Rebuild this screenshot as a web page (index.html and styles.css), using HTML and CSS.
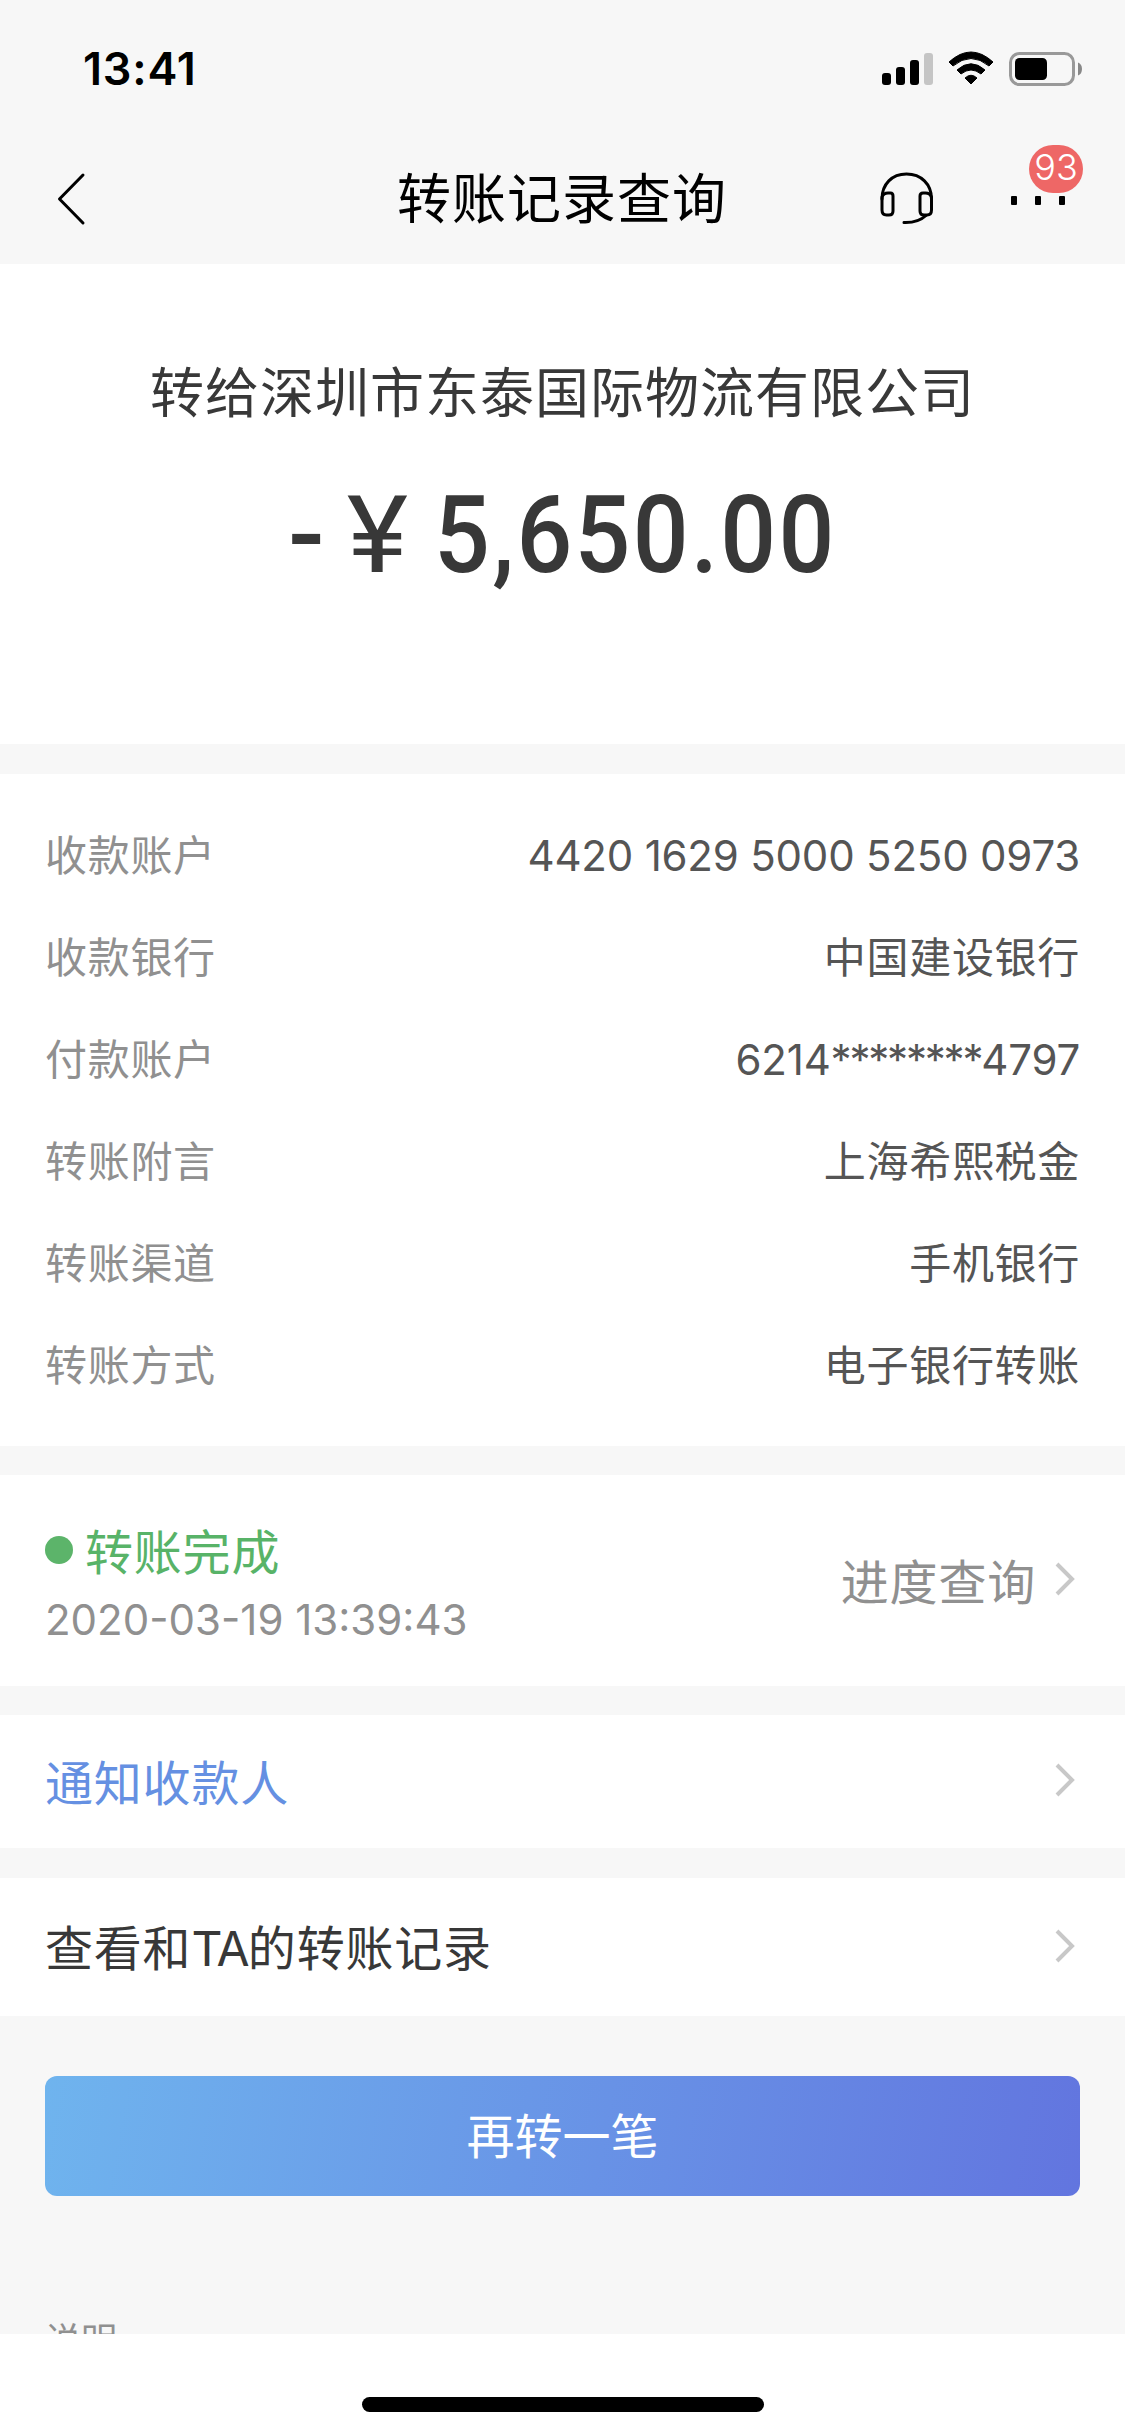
FILE: index.html
```
<!DOCTYPE html>
<html lang="zh-CN">
<head>
    <meta charset="UTF-8">
    <meta name="viewport" content="width=device-width, initial-scale=1.0">
    <title>转账记录查询</title>
    <link rel="stylesheet" href="styles.css">
</head>
<body>
    <div class="page">
        <div class="status-bar">
            <span class="time">13:41</span>
            <svg class="status-icons" width="202" height="36" viewBox="0 0 202 36">
                <!-- signal -->
                <rect x="0" y="22" width="9" height="12" rx="3"/>
                <rect x="14" y="16" width="9" height="18" rx="3"/>
                <rect x="28" y="9" width="9" height="25" rx="3"/>
                <rect x="42" y="2" width="9" height="32" rx="3" fill="#c5c5c5"/>
                <!-- wifi -->
                <path d="M67 11 Q89 -9 111 11 L107 15 Q89 0 71 15 Z" stroke="#000" stroke-width="1" stroke-linejoin="round"/>
                <path d="M75 19 Q89 6.500 103 19 L99 23 Q89 15 79 23 Z" stroke="#000" stroke-width="1" stroke-linejoin="round"/>
                <path d="M83 27 Q89 21.500 95 27 L89 33 Z" stroke="#000" stroke-width="1" stroke-linejoin="round"/>
                <!-- battery -->
                <rect x="128.500" y="2.500" width="63" height="31" rx="9" fill="none" stroke="#999" stroke-width="3"/>
                <rect x="133" y="7" width="32" height="22" rx="4.500"/>
                <path d="M196 11.500 Q200 13 200 18 Q200 23 196 24.500 Z" fill="#888"/>
            </svg>
        </div>

        <div class="nav">
            <svg class="back" width="30" height="54" viewBox="0 0 30 54">
                <path d="M26 3 L2.500 27 L26 51" fill="none" stroke="#000" stroke-width="3" stroke-linecap="round" stroke-linejoin="round"/>
            </svg>
            <h1>转账记录查询</h1>
            <svg class="service" width="54" height="54" viewBox="0 0 54 54">
                <g fill="none" stroke="#000" stroke-width="3" stroke-linecap="round" stroke-linejoin="round">
                    <path d="M2 27 C2 12 12 2 26.500 2 C41 2 51.500 12 51.500 27"/>
                    <path d="M2 25 Q3.500 21 8 21 H10.500 Q13 21 13 24 V39 Q13 43 9 43 H6.500 Q2 43 2 38 Z"/>
                    <path d="M51.500 25 Q50 21 45.500 21 H43 Q40 21 40 24 V39 Q40 43 44 43 H47 Q51.500 43 51.500 38 Z"/>
                    <path d="M46 43.500 Q38 51 24 50.500"/>
                </g>
            </svg>
            <div class="more">
                <i></i><i></i><i></i>
                <span class="badge">93</span>
            </div>
        </div>

        <div class="summary">
            <div class="payee">转给深圳市东泰国际物流有限公司</div>
            <div class="amount">
                <span class="minus">-</span>
                <span class="yen">¥</span>
                <span class="number">5,650.00</span>
            </div>
        </div>

        <div class="details">
            <div class="row"><span class="label">收款账户</span><span class="account">4420 1629 5000 5250 0973</span></div>
            <div class="row"><span class="label">收款银行</span><span>中国建设银行</span></div>
            <div class="row"><span class="label">付款账户</span><span class="account">6214<span class="mask">********</span>4797</span></div>
            <div class="row"><span class="label">转账附言</span><span>上海希熙税金</span></div>
            <div class="row"><span class="label">转账渠道</span><span>手机银行</span></div>
            <div class="row"><span class="label">转账方式</span><span>电子银行转账</span></div>
        </div>

        <div class="progress">
            <div>
                <div class="state"><i class="dot"></i>转账完成</div>
                <div class="date">2020-03-19 13:39:43</div>
            </div>
            <div class="query">
                <span>进度查询</span>
                <svg class="arrow" width="22" height="36" viewBox="0 0 22 36"><path d="M3 3 L18 18 L3 33"/></svg>
            </div>
        </div>

        <div class="link notify">
            <span>通知收款人</span>
            <svg class="arrow" width="22" height="36" viewBox="0 0 22 36"><path d="M3 3 L18 18 L3 33"/></svg>
        </div>

        <div class="link history">
            <span>查看和<span class="ta">TA</span>的转账记录</span>
            <svg class="arrow" width="22" height="36" viewBox="0 0 22 36"><path d="M3 3 L18 18 L3 33"/></svg>
        </div>

        <button class="again">再转一笔</button>

        <div class="note">说明</div>

        <div class="home"><div class="home-bar"></div></div>
    </div>
</body>
</html>
```

FILE: styles.css
```
* {
    box-sizing: border-box;
}
body {
    margin: 0;
    font-family: Inter, "Noto Sans CJK SC", sans-serif;
    background-color: #f7f7f7;
    color: #383838;
}
.page {
    width: 1125px;
    height: 2436px;
    display: flex;
    flex-direction: column;
    overflow: hidden;
}
.status-bar {
    height: 140px;
    padding: 0 41px 2px 83px;
    display: flex;
    justify-content: space-between;
    align-items: center;
    color: #000;
}
.time {
    font-size: 45px;
    font-weight: 600;
    line-height: 60px;
    letter-spacing: 0.8px;
}
.nav {
    height: 124px;
    padding: 0 42px 0 57px;
    display: flex;
    align-items: center;
    color: #000;
}
.back {
    margin-top: -6px;
}
h1 {
    margin: -4px 0 0 310px;
    width: 331px;
    font-size: 54px;
    font-weight: 400;
    letter-spacing: 1px;
    line-height: 72px;
    white-space: nowrap;
}
.service {
    margin: -6px 0 0 152px;
}
.more {
    position: relative;
    width: 54px;
    margin: -4px 0 0 77px;
    display: flex;
    gap: 18px;
}
.more i {
    width: 6px;
    height: 9px;
    border-radius: 1px;
    background: #000;
}
.badge {
    position: absolute;
    left: 18px;
    top: -51px;
    width: 54px;
    height: 48px;
    border-radius: 24px;
    background: #ee6766;
    color: #fff;
    font-size: 36px;
    font-weight: 350;
    line-height: 45px;
    text-align: center;
}
.summary {
    height: 480px;
    padding-top: 94px;
    margin-bottom: 30px;
    background: #fff;
    text-align: center;
}
.payee {
    font-size: 54px;
    line-height: 72px;
    letter-spacing: 1px;
}
.amount {
    height: 120px;
    margin-top: 45px;
    display: flex;
    padding-left: 288px;
    align-items: center;
    font-family: Roboto, sans-serif;
    font-size: 108px;
    font-weight: 500;
    line-height: 120px;
}
.minus {
    width: 52px;
    text-align: left;
}
.yen {
    width: 75px;
    font-weight: 400;
    text-align: center;
    transform: scaleX(1.08);
}
.number {
    margin-left: 19px;
    font-weight: 550;
    letter-spacing: 2.5px;
    transform: scaleX(0.91);
    transform-origin: left;
}
.details {
    height: 672px;
    padding: 31px 45px 29px;
    background: #fff;
    color: #555;
    font-size: 42px;
}
.row {
    height: 102px;
    display: flex;
    justify-content: space-between;
    line-height: 102px;
    letter-spacing: 0.7px;
}
.label {
    color: #909090;
}
.account {
    letter-spacing: -0.2px;
}
.mask {
    letter-spacing: -2.2px;
}
.progress {
    height: 211px;
    margin: 29px 0;
    padding: 0 45px;
    display: flex;
    justify-content: space-between;
    background: #fff;
    color: #909090;
    font-size: 48px;
    letter-spacing: 0.8px;
}
.state {
    display: flex;
    align-items: center;
    margin-top: 47px;
    line-height: 62px;
    color: #58b368;
}
.dot {
    width: 28px;
    height: 28px;
    margin: -6px 12px 0 0;
    border-radius: 50%;
    background: #5cb46a;
}
.date {
    margin-top: 5px;
    font-size: 42px;
    line-height: 62px;
    letter-spacing: 0;
}
.query {
    display: flex;
    align-items: center;
    gap: 18px;
    height: 216px;
    line-height: 64px;
}
.arrow {
    margin-top: -7px;
    fill: none;
    stroke: #c8c8c8;
    stroke-width: 4px;
}
.query .arrow {
    margin-top: -9px;
    margin-right: 4px;
}
.link {
    height: 133px;
    padding: 4px 49px 0 45px;
    display: flex;
    justify-content: space-between;
    align-items: center;
    background: #fff;
    font-size: 48px;
    line-height: 64px;
    letter-spacing: 0.8px;
}
.notify {
    color: #6590e2;
}
.history {
    height: 138px;
    margin-top: 30px;
}
.ta {
    letter-spacing: -1.8px;
}
.again {
    height: 120px;
    margin: 60px 45px 0;
    padding: 2px 0 0;
    border: none;
    border-radius: 12px;
    background: linear-gradient(100deg, #6fb4ee, #6275df);
    color: #fff;
    font-family: inherit;
    font-size: 48px;
    line-height: 118px;
}
.note {
    height: 138px;
    padding: 121px 45px 0;
    overflow: hidden;
    color: #909090;
    font-size: 36px;
    line-height: 48px;
}
.home {
    height: 102px;
    padding-top: 63px;
    background: #fff;
}
.home-bar {
    width: 402px;
    height: 15px;
    margin: 0 auto;
    border-radius: 8px;
    background: #000;
}
```
